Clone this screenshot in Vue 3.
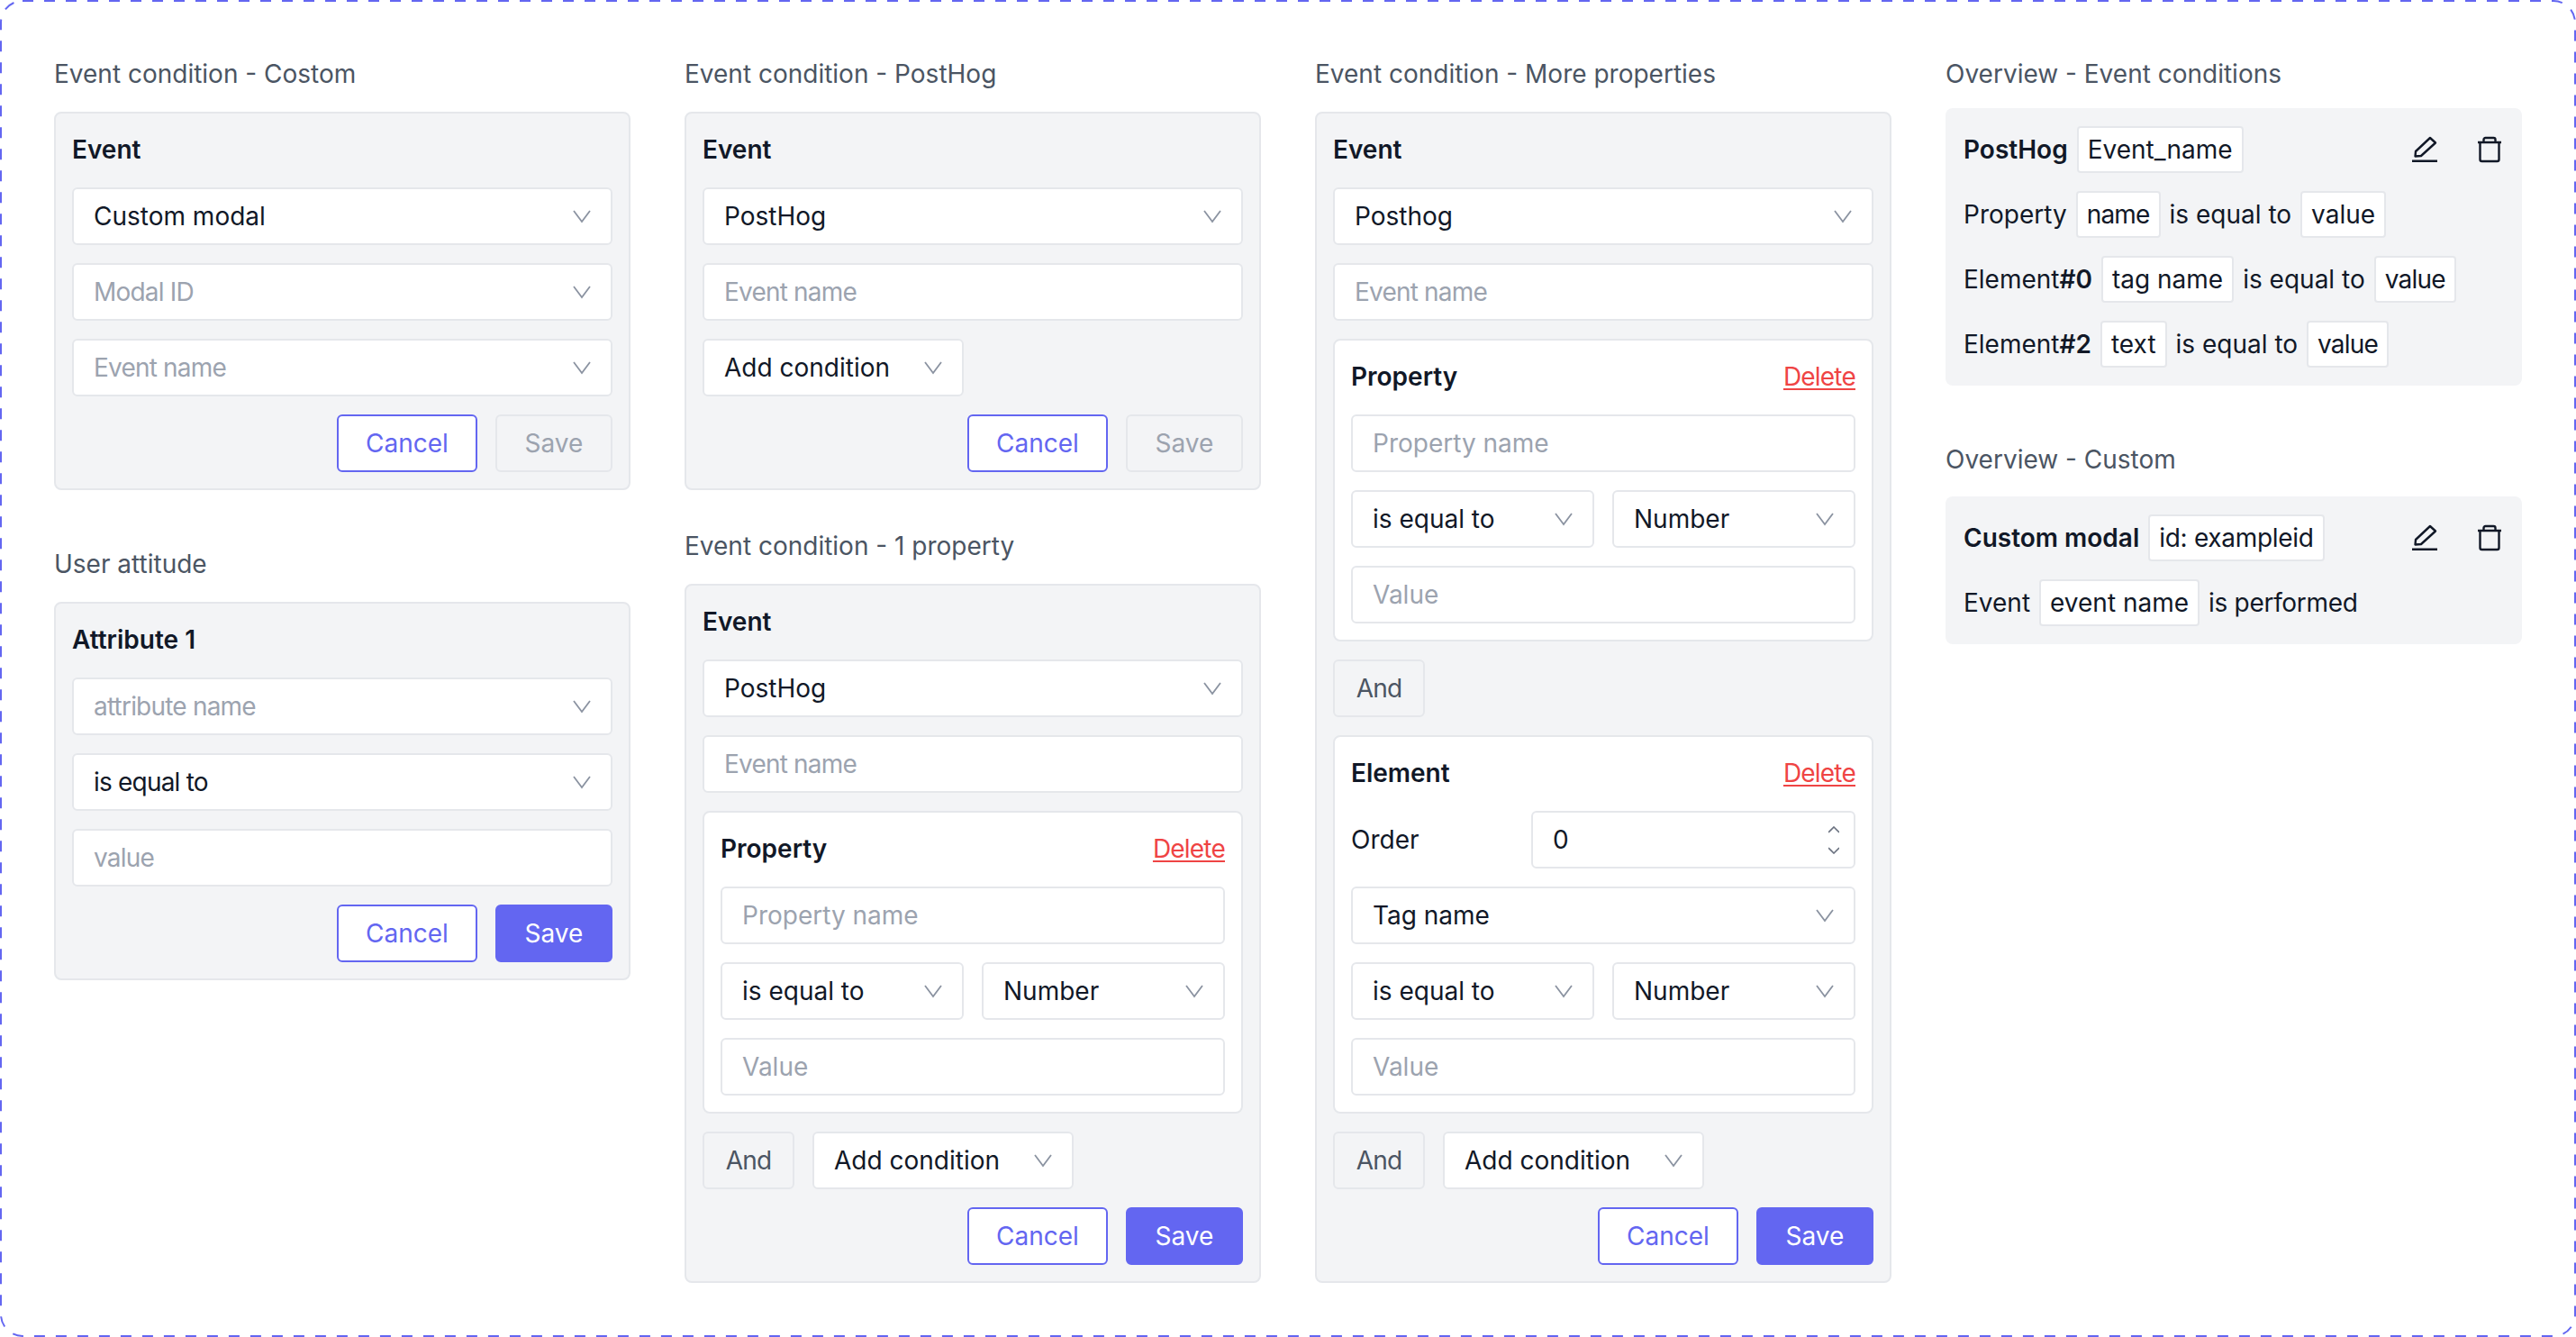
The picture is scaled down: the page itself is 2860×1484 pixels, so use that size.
<template>
  <div class="page">
    <svg class="frame" width="2860" height="1484">
      <rect x="1" y="1" width="2858" height="1482" rx="24" />
    </svg>
    <svg class="defs" width="0" height="0">
      <symbol id="chev" viewBox="0 0 28 28">
        <path d="M5 8 14 20 23 8" fill="none" stroke="currentColor" stroke-width="1.800" />
      </symbol>
      <symbol id="pencil" viewBox="0 0 32 32">
        <path d="M6 18 22 3l6 5.500L12 23l-6.500.5zM2 28.700h28" fill="none" stroke="currentColor" stroke-width="2.400" stroke-linejoin="round" />
      </symbol>
      <symbol id="trash" viewBox="0 0 32 32">
        <path d="M3 8h26M5.500 8v19a2 2 0 0 0 2 2h17a2 2 0 0 0 2-2V8M9.500 8V5a2 2 0 0 1 2-2h9a2 2 0 0 1 2 2v3" fill="none" stroke="currentColor" stroke-width="2.400" stroke-linejoin="round" />
      </symbol>
    </svg>

    <div class="columns">
      <div class="col col-wide">
        <section>
          <div class="title">Event condition - Costom</div>
          <div class="panel">
            <div class="head">Event</div>
            <div class="field">Custom modal<svg class="chev"><use href="#chev" /></svg></div>
            <div class="field muted tight">Modal ID<svg class="chev"><use href="#chev" /></svg></div>
            <div class="field muted tight">Event name<svg class="chev"><use href="#chev" /></svg></div>
            <div class="actions">
              <button class="btn cancel">Cancel</button>
              <button class="btn disabled">Save</button>
            </div>
          </div>
        </section>
        <section>
          <div class="title">User attitude</div>
          <div class="panel">
            <div class="head">Attribute 1</div>
            <div class="field muted tight">attribute name<svg class="chev"><use href="#chev" /></svg></div>
            <div class="field tight">is equal to<svg class="chev"><use href="#chev" /></svg></div>
            <div class="field muted tight">value</div>
            <div class="actions">
              <button class="btn cancel">Cancel</button>
              <button class="btn primary">Save</button>
            </div>
          </div>
        </section>
      </div>

      <div class="col">
        <section>
          <div class="title">Event condition - PostHog</div>
          <div class="panel">
            <div class="head">Event</div>
            <div class="field">PostHog<svg class="chev"><use href="#chev" /></svg></div>
            <div class="field muted tight">Event name</div>
            <div class="and-row">
              <div class="field add">Add condition<svg class="chev"><use href="#chev" /></svg></div>
            </div>
            <div class="actions">
              <button class="btn cancel">Cancel</button>
              <button class="btn disabled">Save</button>
            </div>
          </div>
        </section>
        <section>
          <div class="title">Event condition - 1 property</div>
          <div class="panel">
            <div class="head">Event</div>
            <div class="field">PostHog<svg class="chev"><use href="#chev" /></svg></div>
            <div class="field muted tight">Event name</div>
            <div class="card">
              <div class="head">Property<a class="delete">Delete</a></div>
              <div class="field muted">Property name</div>
              <div class="pair">
                <div class="field">is equal to<svg class="chev"><use href="#chev" /></svg></div>
                <div class="field">Number<svg class="chev"><use href="#chev" /></svg></div>
              </div>
              <div class="field muted">Value</div>
            </div>
            <div class="and-row">
              <button class="btn and">And</button>
              <div class="field add">Add condition<svg class="chev"><use href="#chev" /></svg></div>
            </div>
            <div class="actions">
              <button class="btn cancel">Cancel</button>
              <button class="btn primary">Save</button>
            </div>
          </div>
        </section>
      </div>

      <div class="col">
        <section>
          <div class="title">Event condition - More properties</div>
          <div class="panel">
            <div class="head">Event</div>
            <div class="field">Posthog<svg class="chev"><use href="#chev" /></svg></div>
            <div class="field muted tight">Event name</div>
            <div class="card">
              <div class="head">Property<a class="delete">Delete</a></div>
              <div class="field muted">Property name</div>
              <div class="pair">
                <div class="field">is equal to<svg class="chev"><use href="#chev" /></svg></div>
                <div class="field">Number<svg class="chev"><use href="#chev" /></svg></div>
              </div>
              <div class="field muted">Value</div>
            </div>
            <div class="and-row">
              <button class="btn and">And</button>
            </div>
            <div class="card">
              <div class="head">Element<a class="delete">Delete</a></div>
              <div class="order">
                <span>Order</span>
                <div class="field">
                  0
                  <svg class="spin" viewBox="0 0 12 31">
                    <path d="M0 7 6 1l6 6M0 24l6 6 6-6" />
                  </svg>
                </div>
              </div>
              <div class="field">Tag name<svg class="chev"><use href="#chev" /></svg></div>
              <div class="pair">
                <div class="field">is equal to<svg class="chev"><use href="#chev" /></svg></div>
                <div class="field">Number<svg class="chev"><use href="#chev" /></svg></div>
              </div>
              <div class="field muted">Value</div>
            </div>
            <div class="and-row">
              <button class="btn and">And</button>
              <div class="field add">Add condition<svg class="chev"><use href="#chev" /></svg></div>
            </div>
            <div class="actions">
              <button class="btn cancel">Cancel</button>
              <button class="btn primary">Save</button>
            </div>
          </div>
        </section>
      </div>

      <div class="col col-wide">
        <section>
          <div class="title">Overview - Event conditions</div>
          <div class="panel flat">
            <div class="line">
              <b>PostHog</b><span class="chip">Event_name</span>
              <div class="tools">
                <svg class="tool"><use href="#pencil" /></svg>
                <svg class="tool"><use href="#trash" /></svg>
              </div>
            </div>
            <div class="line">Property<span class="chip tight">name</span>is equal to<span class="chip">value</span></div>
            <div class="line"><span>Element<b>#0</b></span><span class="chip">tag name</span>is equal to<span class="chip tight">value</span></div>
            <div class="line"><span>Element<b>#2</b></span><span class="chip">text</span>is equal to<span class="chip tight">value</span></div>
          </div>
        </section>
        <section>
          <div class="title">Overview - Custom</div>
          <div class="panel flat">
            <div class="line">
              <b>Custom modal</b><span class="chip slight">id: exampleid</span>
              <div class="tools">
                <svg class="tool"><use href="#pencil" /></svg>
                <svg class="tool"><use href="#trash" /></svg>
              </div>
            </div>
            <div class="line">Event<span class="chip">event name</span><span class="slight">is performed</span></div>
          </div>
        </section>
      </div>
    </div>
  </div>
</template>

<script setup>
</script>

<style>
html,
body {
  margin: 0;
  background: #fff;
}
</style>

<style scoped>
.page {
  position: relative;
  box-sizing: border-box;
  width: 2860px;
  height: 1484px;
  padding: 60px;
  font-family: Inter, "Liberation Sans", sans-serif;
  font-size: 28px;
  line-height: 44px;
  color: #111827;
}

.frame {
  position: absolute;
  top: 0;
  left: 0;
}

.frame rect {
  fill: none;
  stroke: #6366f1;
  stroke-width: 2;
  stroke-dasharray: 12 12;
}

.defs {
  position: absolute;
}

.columns {
  display: grid;
  grid-template-columns: repeat(4, 640px);
  column-gap: 60px;
}

.col {
  display: flex;
  flex-direction: column;
  gap: 40px;
}

.col-wide {
  gap: 60px;
}

.title {
  margin-bottom: 20px;
  color: #4b5563;
}

.panel {
  display: flex;
  flex-direction: column;
  gap: 20px;
  padding: 18px;
  background: #f3f4f6;
  border: 2px solid #e5e7eb;
  border-radius: 8px;
}

.panel.flat {
  border: none;
  padding: 20px;
  margin-top: -1px;
}

section:first-child .panel.flat {
  margin-top: -4px;
}

.head {
  display: flex;
  justify-content: space-between;
  font-weight: 600;
}

.delete {
  font-weight: 400;
  letter-spacing: -0.8px;
  color: #ef4444;
  text-decoration: underline;
  text-decoration-thickness: 2px;
  text-underline-offset: 3px;
}

.tight {
  letter-spacing: -0.8px;
}

.slight {
  letter-spacing: -0.3px;
}

.field {
  display: flex;
  align-items: center;
  justify-content: space-between;
  box-sizing: border-box;
  height: 64px;
  padding: 0 18px 0 22px;
  background: #fff;
  border: 2px solid #e5e7eb;
  border-radius: 6px;
}

.field.muted {
  color: #9ca3af;
}

.field.add {
  width: 290px;
}

.chev {
  flex: none;
  width: 28px;
  height: 28px;
  color: #8b93a1;
}

.spin {
  width: 12px;
  height: 31px;
  margin-right: -2px;
  fill: none;
  stroke: #6b7280;
  stroke-width: 1.600;
}

.card {
  display: flex;
  flex-direction: column;
  gap: 20px;
  padding: 18px;
  background: #fff;
  border: 2px solid #e5e7eb;
  border-radius: 8px;
}

.pair {
  display: grid;
  grid-template-columns: 1fr 1fr;
  gap: 20px;
}

.order {
  display: grid;
  grid-template-columns: 200px 360px;
  align-items: center;
}

.and-row {
  display: flex;
  gap: 20px;
}

.actions {
  display: flex;
  justify-content: flex-end;
  gap: 20px;
}

.btn {
  box-sizing: border-box;
  height: 64px;
  width: 130px;
  padding: 0;
  font: inherit;
  border: 2px solid #e5e7eb;
  border-radius: 6px;
  background: transparent;
}

.btn.cancel {
  width: 156px;
  color: #6366f1;
  background: #fff;
  border-color: #6366f1;
}

.btn.primary {
  color: #fff;
  background: #6366f1;
  border-color: #6366f1;
}

.btn.disabled {
  color: #9ca3af;
}

.btn.and {
  width: 102px;
  color: #4b5563;
  letter-spacing: -0.8px;
}

.line {
  display: flex;
  align-items: center;
  gap: 10px;
  height: 52px;
}

.line b {
  font-weight: 600;
}

.chip {
  box-sizing: border-box;
  height: 52px;
  padding: 2px 10px;
  line-height: 44px;
  background: #fff;
  border: 2px solid #e5e7eb;
  border-radius: 4px;
}

.tools {
  display: flex;
  gap: 40px;
  margin-left: auto;
}

.tool {
  width: 32px;
  height: 32px;
}
</style>
